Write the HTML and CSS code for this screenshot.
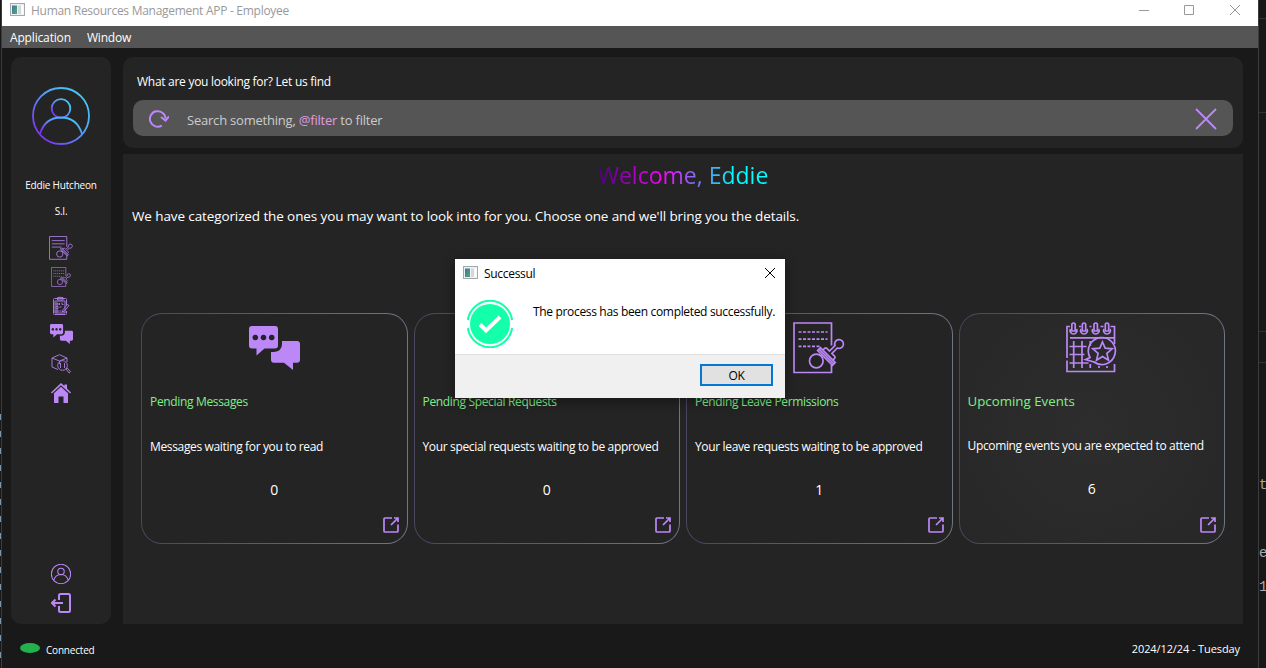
FILE: index.html
```html
<!DOCTYPE html>
<html lang="en">
<head>
<meta charset="utf-8">
<title>Human Resources Management APP - Employee</title>
<link rel="stylesheet" href="styles.css">
</head>
<body>
<svg width="0" height="0" class="defs">
  <defs>
    <linearGradient id="avatar" x1="0" y1="1" x2="1" y2="0">
      <stop offset="0.1" stop-color="#7f2cf5"/><stop offset="0.55" stop-color="#559cf5"/><stop offset="1" stop-color="#3fd8f5"/>
    </linearGradient>
    <linearGradient id="app" x1="0" y1="0" x2="1" y2="1">
      <stop offset="0" stop-color="#44749c"/><stop offset="1" stop-color="#4caa78"/>
    </linearGradient>
    <symbol id="i-app" viewBox="0 0 15 13">
      <rect x=".5" y=".5" width="14" height="12" fill="#eef0f1" stroke="#a2a8ab"/>
      <rect x="2" y="2.5" width="5" height="8.5" fill="url(#app)" stroke="none"/>
      <rect x="8" y="2.5" width="3" height="8.5" fill="#d3d9db" stroke="none"/><rect x="11.5" y="2.5" width="2" height="8.5" fill="#fff" stroke="none"/>
    </symbol>
    <symbol id="i-stamp" viewBox="0 0 52 52">
      <path d="M38.500 23.500V1H1v49.500h37.500V43"/>
      <circle cx="23.3" cy="39" r="6.8"/>
      <g transform="translate(34.5 33.5) rotate(45)">
        <path d="M-10.500 -.5h21v4h-21zM-10.500 1.500h21M-7 -.5v-2.500q0-1.500 1.500-1.500h3.800v-7.800a4.400 4.400 0 1 1 3.400 0v7.800h3.800q1.500 0 1.500 1.500v2.500"/>
      </g>
    </symbol>
    <symbol id="i-chat" viewBox="0 0 51 44">
      <path fill="currentColor" stroke="none" fill-rule="evenodd" d="M3 0h23q3 0 3 3v16.500q0 3-3 3H15.500L7.500 29.500v-7H3q-3 0-3-3V3q0-3 3-3zM6.300 8.700a2.800 2.800 0 1 0 .01 0zM14.500 8.700a2.800 2.800 0 1 0 .01 0zM22.700 8.700a2.800 2.800 0 1 0 .01 0z"/>
      <path fill="currentColor" stroke="none" d="M33 15h15q3 0 3 3v15.700q0 3-3 3h-4V44l-9-7.300H25q-3 0-3-3V26h3q8-1 8-8z"/>
    </symbol>
    <symbol id="i-open" viewBox="0 0 16 16">
      <path d="M9 1H2Q1 1 1 2v12q0 1 1 1h12q1 0 1-1V7.500M8 8l7-7M11 1h4v4"/>
    </symbol>
    <symbol id="i-person" viewBox="0 0 58 58">
      <circle cx="29" cy="29" r="28"/><circle cx="29" cy="21.500" r="9.300"/><path d="M8 47q5-16.500 21-16.500T50 47"/>
    </symbol>
  </defs>
</svg>

<div class="desktop">
  <div class="behind-left"></div>
  <div class="window">
    <header class="titlebar">
      <svg class="app-icon"><use href="#i-app"/></svg>
      <span class="title">Human Resources Management APP - Employee</span>
      <svg class="controls" viewBox="0 0 102 12"><path d="M0 6.500h10M45.500 1.500h9v9h-9zM91 1l10 10M101 1L91 11"/></svg>
    </header>
    <nav class="menubar"><span>Application</span><span>Window</span></nav>

    <div class="workspace">
      <aside class="sidebar">
        <svg class="avatar"><use href="#i-person"/></svg>
        <div class="name">Eddie Hutcheon</div>
        <div class="dept">S.I.</div>
        <div class="tools">
          <svg class="t24" viewBox="0 0 52 52"><use href="#i-stamp"/><path d="M6 10h28M6 17h28M6 24h21"/></svg>
          <svg class="t20 t-leave" viewBox="0 0 52 52"><use href="#i-stamp"/><path stroke-dasharray="3 2" d="M6 10h28M6 17h28M6 24h21"/></svg>
          <svg class="t20 t-clip" viewBox="0 0 20 20"><path d="M15.500 9V3.500q0-1-1-1h-11q-1 0-1 1v14q0 1 1 1h11q1 0 1-1V15M4 5h10v12H4zM6.500 3V1.500h2q.5-1.500 1 0h2.500V4H6.500zM5 7h2v2H5zM5 10.500h2v2H5zM5 14h2v2H5zM8.500 7v2M8.500 11h2M8.500 15h2M11 6.500v2h1.500M16.500 8.500l1.500 1-4.500 5.500-2 1 .5-2.300z"/></svg>
          <svg class="t-chat"><use href="#i-chat"/></svg>
          <svg class="t20 t-box" viewBox="0 0 20 20"><path d="M7 15.500L1 13V4l7.500-3.300L16 4v4M1 4l7.500 3L16 4M8.500 7v3"/><circle cx="11.500" cy="11.500" r="4.800"/><path d="M9.500 9v5M13.500 9v5"/><path d="M15 15l1.200-1 3.300 3.800-1.300 1.300z"/></svg>
          <svg class="t20 t-home" viewBox="0 0 20 20"><path class="solid" d="M10 0l3.500 3V1.500H16v4L20 9.500l-1 1L10 2.200 1 10.500l-1-1z"/><path class="solid" d="M10 3.700l7 6.500V20h-4.500v-6.500h-5V20H3v-9.800z"/></svg>
        </div>
        <div class="account">
          <svg class="t20 t-user"><use href="#i-person"/></svg>
          <svg class="t20 t-exit" viewBox="0 0 20 20"><path d="M8 7V2.500Q8 1 9.500 1h8Q19 1 19 2.500v15q0 1.500-1.500 1.500h-8Q8 19 8 17.500V13M12 10H1M4.500 6.500L1 10l3.500 3.500"/></svg>
        </div>
      </aside>

      <main class="main">
        <section class="search">
          <div class="question">What are you looking for? Let us find</div>
          <div class="field">
            <svg class="refresh" viewBox="0 0 20 18"><path d="M12.800 15.600A7.800 7.800 0 1 1 16.500 8.500M12 7l4.500 3.700L20 6.500"/></svg>
            <span class="placeholder">Search something, <b>@filter</b> to filter</span>
            <svg class="clear" viewBox="0 0 20 20"><path d="M0 0l20 20M20 0L0 20"/></svg>
          </div>
        </section>
        <section class="content">
          <h1><span>Welcome, Eddie</span></h1>
          <p class="intro">We have categorized the ones you may want to look into for you. Choose one and we'll bring you the details.</p>
          <div class="cards">
            <article class="card">
              <div class="art"><svg class="art-chat"><use href="#i-chat"/></svg></div>
              <h2>Pending Messages</h2><p>Messages waiting for you to read</p><div class="count">0</div>
              <svg class="open"><use href="#i-open"/></svg>
            </article>
            <article class="card">
              <div class="art"><svg class="art-doc" viewBox="0 0 52 52"><use href="#i-stamp"/><path d="M6 10h28M6 17h28M6 24h21"/></svg></div>
              <h2>Pending Special Requests</h2><p>Your special requests waiting to be approved</p><div class="count">0</div>
              <svg class="open"><use href="#i-open"/></svg>
            </article>
            <article class="card">
              <div class="art"><svg class="art-doc" viewBox="0 0 52 52"><use href="#i-stamp"/><path stroke-dasharray="3 1.500" d="M5.500 10h29M5.500 17.200h29M5.500 24.300h21"/></svg></div>
              <h2>Pending Leave Permissions</h2><p>Your leave requests waiting to be approved</p><div class="count">1</div>
              <svg class="open"><use href="#i-open"/></svg>
            </article>
            <article class="card hover">
              <div class="art"><svg class="art-doc" viewBox="0 0 52 52"><path d="M4 4.500H1V36M1 38.500V49.500h47.500V42M13 4.500h2M23.500 4.500h2M34.500 4.500h3M44.500 4.500h4V22M4 15.800h44"/><path d="M7.700 19v27M16 19v27M24.300 19v5M24.300 42v4M33 44v2M41 44v2M3.500 24.500h17M3.500 32.500h15M3.500 41h19"/><path d="M7.500 1q1.700 0 1.700 2v6H5.800V3q0-2 1.700-2zM18 1q1.700 0 1.700 2v6h-3.400V3q0-2 1.700-2zM29.700 1q1.700 0 1.700 2v6H28V3q0-2 1.700-2zM41 1q1.700 0 1.700 2v6h-3.400V3q0-2 1.700-2z"/><path d="M4.500 7a3.400 3.400 0 1 0 6 0M15 7a3.400 3.400 0 1 0 6 0M26.700 7a3.400 3.400 0 1 0 6 0M38 7a3.400 3.400 0 1 0 6 0"/><path d="M24 35.500a13.500 13.500 0 1 1 4 4.500l-8.500-2.500z"/><path d="M36.500 20l2.700 6.200 7 .6-5.300 4.600 1.600 6.800-6-3.600-6 3.600 1.600-6.800-5.300-4.600 7-.6z"/></svg></div>
              <h2>Upcoming Events</h2><p>Upcoming events you are expected to attend</p><div class="count">6</div>
              <svg class="open"><use href="#i-open"/></svg>
            </article>
          </div>
        </section>
      </main>
    </div>

    <footer class="status"><i class="lamp"></i><span class="connected">Connected</span><time>2024/12/24 - Tuesday</time></footer>
  </div>
  <div class="behind-right"><span>t</span><span>e</span><span>1</span></div>
</div>

<div class="dialog">
  <div class="dialog-title"><svg class="app-icon"><use href="#i-app"/></svg><span>Successul</span><svg class="dialog-close" viewBox="0 0 10 10"><path d="M0 0l10 10M10 0L0 10"/></svg></div>
  <div class="dialog-body">
    <svg class="check" viewBox="0 0 46 48"><circle cx="23" cy="24" r="20" fill="#14ffaa" stroke="none"/><path d="M.8 20A22.500 23 0 0 1 45.200 20M.8 28A22.500 23 0 0 0 45.200 28" fill="none" stroke="#14ffaa" stroke-width="2"/><path d="M13 24.500l6 6L33 17" fill="none" stroke="#fff" stroke-width="4"/></svg>
    <span class="message">The process has been completed successfully.</span>
  </div>
  <div class="dialog-foot"><button>OK</button></div>
</div>
</body>
</html>
```
FILE: styles.css
```css
* { box-sizing: border-box; }
body { margin: 0; width: 1266px; height: 668px; overflow: hidden; background: #181818; color: #fff; font: 12px/16px "Open Sans", "Noto Sans", sans-serif; }
h1, h2, p { margin: 0; font-weight: 400; }
svg { display: block; flex: none; fill: none; stroke: #bc88f8; color: #bc88f8; }
span, time, h2, p, .name { white-space: nowrap; }
.defs { position: absolute; }
.desktop { display: flex; height: 668px; }
.behind-left { width: 2px; border-right: 1px solid #3c3c3c; background: repeating-linear-gradient(#181818 0 11px, #7898b0 11px 17px); background-size: 1px 260px; background-repeat: no-repeat; background-position: 0 403px; }
.behind-right { width: 8px; border-left: 1px solid #3c3c3c; padding-top: 477px; overflow: hidden; color: #aaa; font: 14px/17px "Liberation Mono", monospace; background: linear-gradient(#333, #333) 0 18px/8px 1px no-repeat, linear-gradient(#333, #333) 0 112px/8px 1px no-repeat, linear-gradient(#333, #333) 0 331px/8px 1px no-repeat, linear-gradient(#333, #333) 0 362px/8px 1px no-repeat; }
.behind-right span { display: block; margin-bottom: 51px; }
.behind-right span + span { margin-bottom: 17px; }
.window { width: 1256px; display: flex; flex-direction: column; background: #191919; }
.titlebar { height: 26px; background: #fff; color: #999; display: flex; padding: 3px 17px 0 8px; }
.app-icon { width: 15px; height: 13px; }
.title { margin: 0 auto 0 6px; letter-spacing: -.28px; }
.controls { width: 102px; height: 12px; margin-top: 1px; stroke: #999; }
.menubar { height: 22px; background: #555; padding: 4px 8px; display: flex; gap: 16px; letter-spacing: -.16px; }
.workspace { height: 576px; padding: 9px 15px 0 9px; display: flex; gap: 12px; }
.sidebar { width: 100px; height: 567px; border-radius: 10px; background: #242424; display: flex; flex-direction: column; align-items: center; padding-top: 30px; }
.avatar { width: 58px; height: 58px; stroke: url(#avatar); stroke-width: 1.800; }
.name { margin-top: 33px; font-size: 10px; line-height: 14px; letter-spacing: -.2px; }
.dept { margin-top: 12px; font-size: 10px; line-height: 14px; letter-spacing: -.2px; }
.tools { margin-top: 18px; display: flex; flex-direction: column; align-items: center; stroke-width: 1; }
.t24 { width: 24px; height: 24px; stroke-width: 2; stroke: #a678d9; }
.t20 { width: 20px; height: 20px; }
.t-leave { margin-top: 7px; stroke-width: 2; stroke: #a678d9; }
.t-clip { margin-top: 9px; stroke: #a678d9; }
.t-chat { width: 23px; height: 20px; margin-top: 8px; }
.t-box { margin-top: 10px; stroke: #a678d9; }
.t-home { margin-top: 9px; }
.solid { fill: #bc88f8; stroke: none; }
.account { margin: auto 0 11px; }
.t-user { stroke-width: 3; }
.t-exit { margin-top: 9px; stroke-width: 2; }
.main { width: 1120px; display: flex; flex-direction: column; gap: 6px; }
.search { height: 91px; border-radius: 10px; background: #242424; padding: 17px 10px 0; }
.question { margin-left: 4px; letter-spacing: -.28px; }
.field { margin-top: 10px; height: 36px; border-radius: 10px; background: #555; display: flex; align-items: center; padding: 0 17px 0 16px; }
.refresh { width: 20px; height: 18px; stroke-width: 2; margin-top: 2px; }
.placeholder { margin: 4px auto 0 18px; font-size: 13px; line-height: 18px; letter-spacing: -.21px; color: #ccc; }
.placeholder b { font-weight: 400; color: #e09be0; }
.clear { width: 20px; height: 20px; stroke-width: 1.800; overflow: visible; margin-top: 2px; }
.content { height: 470px; background: #242424; padding: 5px 18px 0; }
h1 { font-size: 23px; line-height: 32px; text-align: center; }
h1 span { background: linear-gradient(90deg, #4b0082, #f0f 38%, #4d9df0 65%, #0ff 80%); -webkit-background-clip: text; background-clip: text; color: transparent; }
.intro { margin: 15px 0 0 -9px; font-size: 13.5px; line-height: 20px; letter-spacing: -.11px; }
.cards { margin-top: 87px; display: grid; grid-template-columns: repeat(4, minmax(0, 1fr)); gap: 6px; }
.card { height: 231px; border: 1px solid transparent; border-radius: 21px; padding: 8px 8px 0; display: flex; flex-direction: column; background: linear-gradient(#242424, #242424) padding-box, linear-gradient(90deg, #47475e, #707685) border-box; }
.hover { background: radial-gradient(circle, #2d2d2d, #272727) padding-box, linear-gradient(90deg, #47475e, #707685) border-box; }
.art { height: 52px; display: flex; justify-content: center; align-items: center; }
.art-chat { width: 51px; height: 44px; }
.art-doc { width: 52px; height: 52px; stroke-width: 1.700; }
h2 { margin-top: 19px; font-size: 12px; line-height: 18px; letter-spacing: -.34px; color: #80ef88; }
.card p { margin-top: 27px; line-height: 18px; letter-spacing: -.35px; }
.count { margin-top: 23px; text-align: center; font-size: 14px; line-height: 22px; }
.open { width: 16px; height: 16px; margin: 16px 0 0 auto; stroke-width: 1.700; }
.hover h2 { margin-top: 18px; font-size: 13.300px; letter-spacing: 0; }
.hover .open { margin-top: 17px; }
.status { height: 44px; padding: 3px 18px 0; display: flex; align-items: center; font-size: 11px; }
.lamp { width: 20px; height: 10px; border-radius: 50%; background: #22b14c; margin-top: 1px; }
.connected { margin: 4px auto 0 6px; font-size: 10px; letter-spacing: -.2px; }
time { margin-top: 3px; letter-spacing: -.1px; }
.dialog { position: absolute; left: 455px; top: 259px; width: 330px; height: 139px; display: flex; flex-direction: column; background: #fff; color: #000; box-shadow: 0 3px 12px rgba(0,0,0,.4); }
.dialog-title { display: flex; padding: 7px 10px 0 8px; height: 29px; }
.dialog-title span { margin: 0 auto 0 6px; letter-spacing: -.3px; }
.dialog-close { width: 10px; height: 10px; stroke: #000; overflow: visible; margin-top: 2px; }
.dialog-body { height: 66px; display: flex; padding: 12px 10px 0 12px; }
.check { width: 46px; height: 48px; }
.message { margin: 4px 0 0 20px; letter-spacing: -.33px; }
.dialog-foot { flex: 1; background: #f0f0f0; border-top: 1px solid #dfdfdf; padding: 9px 12px; display: flex; justify-content: flex-end; }
button { width: 73px; height: 22px; border: 2px solid #0078d7; background: #e1e1e1; padding: 1px 0 0; color: #000; font: 12px/18px "Open Sans", sans-serif; letter-spacing: -.3px; }
```
